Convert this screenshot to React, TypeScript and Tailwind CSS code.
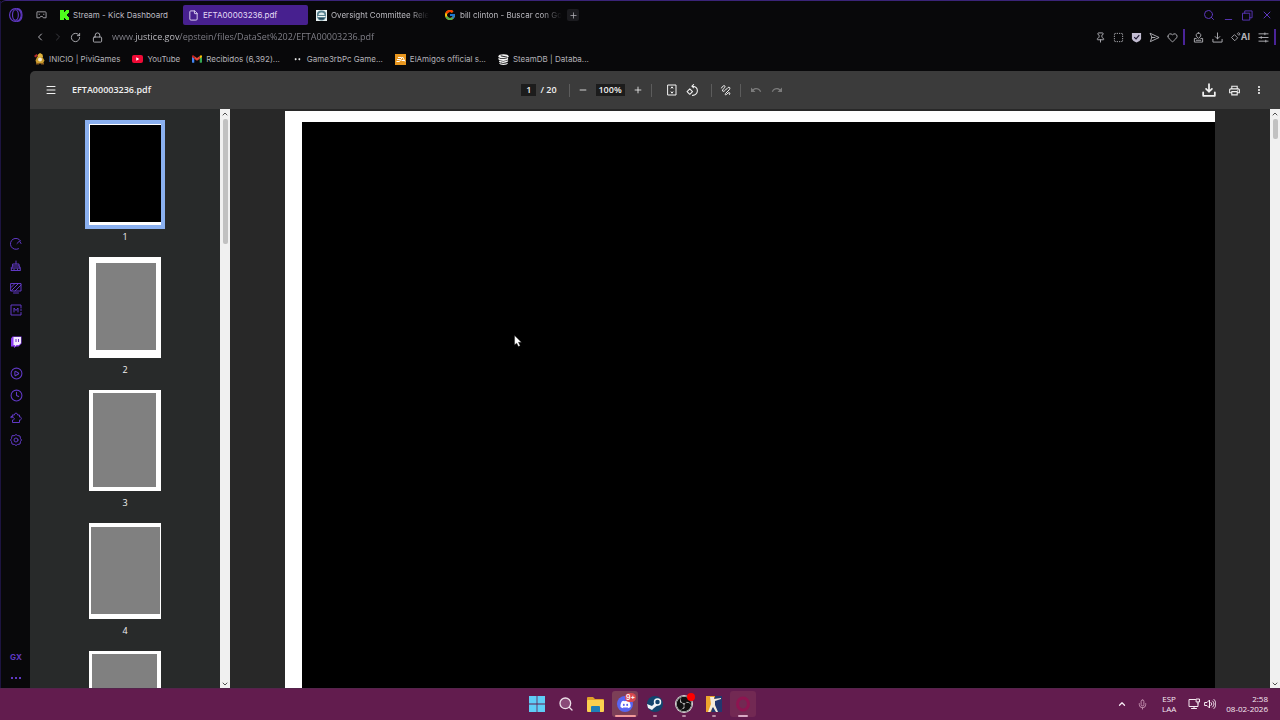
import { useState, type ReactNode } from 'react';
import {
	ChevronLeft,
	ChevronRight,
	ChevronUp,
	ChevronDown,
	CirclePlay,
	Clock,
	File,
	Heart,
	Lock,
	Menu,
	Mic,
	Minus,
	Pin,
	Plus,
	RotateCw,
	Search,
	SquareDashed,
	X,
} from 'lucide-react';
import { FaDiscord } from 'react-icons/fa';
import { FcGoogle } from 'react-icons/fc';
import { MdOutlinePrint, MdMoreVert, MdUndo, MdRedo } from 'react-icons/md';
import { SiObsstudio } from 'react-icons/si';

const URL_TEXT =
	'www.justice.gov/epstein/files/DataSet%202/EFTA00003236.pdf';

type IconProps = { size?: number; children?: ReactNode };

function Stroke({ size = 12, children }: IconProps) {
	return (
		<svg
			width={size}
			height={size}
			viewBox="0 0 24 24"
			fill="none"
			stroke="currentColor"
			strokeWidth="2"
			strokeLinecap="round"
			strokeLinejoin="round"
		>
			{children}
		</svg>
	);
}

function OperaLogo({ size = 14 }: IconProps) {
	return (
		<Stroke size={size}>
			<ellipse cx="11" cy="12" rx="10" ry="11" />
			<ellipse cx="11" cy="12" rx="5" ry="9" />
			<path d="M14 1c11 1 11 21 0 22" />
		</Stroke>
	);
}

function KickLogo() {
	return (
		<svg width="9" height="10" viewBox="0 0 9 10" fill="#4dfb1c">
			<path d="M0 0h4v2h1V1h1V0h3v3H8v1H7v2h1v1h1v3H6V9H5V8H4v2H0z" />
		</svg>
	);
}

function CommitteeLogo() {
	return (
		<svg width="11" height="11" viewBox="0 0 22 22">
			<rect width="22" height="22" fill="#e9f1f3" />
			<path d="M2 8a9 7 0 0 1 18 0v5a9 8 0 0 1-18 0z" fill="#55808e" />
			<path d="M5 10a6 5 0 0 1 12 0z" fill="#dbe8ea" />
			<path d="M3 12h16v2H3z" fill="#f2f6f6" />
			<path d="M5 16h12l-3 3H8z" fill="#23455a" />
		</svg>
	);
}

function PiviLogo() {
	return (
		<svg width="11" height="12" viewBox="0 0 22 24">
			<path d="M0 6l5-4 3 3-5 4z" fill="#b3282d" />
			<path d="M8 3l4-3 5 3 1 5H7z" fill="#e0b23a" />
			<path d="M6 8h11l4 7-3 6H5l-2-6z" fill="#c99a2c" />
			<circle cx="12" cy="13" r="4" fill="#f4ecd0" />
			<path d="M4 20h6v3H4zM14 20h6v3h-6z" fill="#8a5a1e" />
		</svg>
	);
}

function YouTubeLogo() {
	return (
		<svg width="11" height="8" viewBox="0 0 22 16">
			<rect width="22" height="16" rx="4" fill="#f00a36" />
			<path d="M8.500 4.500l6 3.500-6 3.500z" fill="#fff" />
		</svg>
	);
}

function GmailLogo() {
	return (
		<svg width="10" height="8" viewBox="0 0 22 17">
			<path d="M0 3v12a2 2 0 0 0 2 2h3V7z" fill="#4285f4" />
			<path d="M22 3v12a2 2 0 0 1-2 2h-3V7z" fill="#34a853" />
			<path d="M17 2v6l5-4V3c0-3-3-4-5-1z" fill="#fbbc04" />
			<path d="M5 2v6l6 4.500L17 8V2l-6 4.500z" fill="#ea4335" />
			<path d="M0 3v1l5 4V2C3-1 0 0 0 3z" fill="#c5221f" />
		</svg>
	);
}

function GameLogo() {
	return (
		<svg width="11" height="10" viewBox="0 0 11 10">
			<path d="M3.500 4l1.500 1-1.500 1.500-1-1.500zM7.500 4l1 1-1 1.500L6 5z" fill="#e8e8e8" />
		</svg>
	);
}

function EaLogo() {
	return (
		<svg width="11" height="11" viewBox="0 0 22 22">
			<rect width="22" height="22" fill="#e8961e" />
			<path
				d="M6 7h7M4 11h7M3 15h6l6-9 5 9M13 13h5"
				stroke="#fff"
				strokeWidth="2"
				fill="none"
			/>
		</svg>
	);
}

function SteamDbLogo() {
	return (
		<svg width="11" height="11" viewBox="0 0 24 24">
			<ellipse cx="12" cy="5" rx="11" ry="4.500" fill="#f4f4f4" />
			<path
				d="M1 8c4 4 15 4 21 0v4c-5 4-16 4-21 0zM3 14c6 3 13 3 19-1v3c-4 4-15 5-20 1zM2 19c6 3 14 3 20 0-1 6-18 7-20 0z"
				fill="#f4f4f4"
			/>
			<path d="M6 4c4 2 10 1 14 3" stroke="#0a0a0c" strokeWidth="2" fill="none" />
		</svg>
	);
}

function TwitchLogo() {
	return (
		<svg width="12" height="12" viewBox="0 0 24 24">
			<path d="M5 1h18v14l-6 6h-5l-4 3v-3H2V5z" fill="#8a3ff0" />
			<path d="M7 2h15v12l-4 4h-5l-3 3v-3H7z" fill="#f3e9ff" />
			<path d="M11 6h2v6h-2zM16 6h2v6h-2z" fill="#6b2fc4" />
		</svg>
	);
}

const sideIcons = [
	{
		name: 'GX Control',
		icon: (
			<Stroke>
				<path d="M17 21.500A11 11 0 1 1 21 5.500M14 11l5-5 3 5" />
			</Stroke>
		),
	},
	{
		name: 'GX Cleaner',
		icon: (
			<Stroke>
				<path d="M12 2v6M6 8h12v4H6zM5 12l-3 9h19l-2-9M2 16h19M8 21v-3M15 21v-3" />
			</Stroke>
		),
	},
	{
		name: 'Wallpapers',
		icon: (
			<Stroke>
				<path d="M2 3h20v15H2zM2 11l8-8M3 17L17 3M10 18L22 6M7 22h10" />
			</Stroke>
		),
	},
	{
		name: 'Mods',
		icon: (
			<Stroke>
				<path d="M22 8V2H2v20h20v-5M22 11v2M8 16V8l4 5 4-5v8" />
			</Stroke>
		),
	},
	{ name: 'Twitch', className: 'my-[10px]', icon: <TwitchLogo /> },
	{ name: 'Player', icon: <CirclePlay size={13} /> },
	{ name: 'History', icon: <Clock size={13} /> },
	{
		name: 'Extensions',
		icon: (
			<Stroke>
				<path d="M5 6h4c-1-5 7-5 6 0h4v4c5-1 5 7 0 6v5H5v-5c5 0 5-5 0-5-2 0-3 1-3 1V9h3z" />
			</Stroke>
		),
	},
	{
		name: 'Settings',
		icon: (
			<Stroke>
				<path d="M9 3l3-2 3 2 5 1 1 5 2 3-2 3-1 5-5 1-3 2-3-2-5-1-1-5-2-3 2-3 1-5z" />
				<circle cx="12" cy="12" r="4" />
			</Stroke>
		),
	},
];

function Sidebar() {
	return (
		<aside className="flex w-[30px] shrink-0 flex-col items-center border-l border-[#1d1440] pl-px text-[#6039c4]">
			<button aria-label="Menu" className="flex h-[28px] items-center">
				<OperaLogo />
			</button>
			<nav className="my-auto flex flex-col pt-2">
				{sideIcons.map((s) => (
					<button
						key={s.name}
						aria-label={s.name}
						className={`flex h-[22px] w-[22px] items-center justify-center ${s.className ?? ''}`}
					>
						{s.icon}
					</button>
				))}
			</nav>
			<button className="h-[22px] text-[8px] font-bold">GX</button>
			<button aria-label="More" className="flex h-5 items-center gap-[2px]">
				<i className="h-[2px] w-[2px] bg-[#6039c4]" />
				<i className="h-[2px] w-[2px] bg-[#6039c4]" />
				<i className="h-[2px] w-[2px] bg-[#6039c4]" />
			</button>
		</aside>
	);
}

const tabs = [
	{ title: 'Stream - Kick Dashboard', icon: <KickLogo /> },
	{ title: 'EFTA00003236.pdf', icon: <File size={11} strokeWidth={2} />, active: true },
	{ title: 'Oversight Committee Rele', icon: <CommitteeLogo />, faded: true },
	{ title: 'bill clinton - Buscar con Go', icon: <FcGoogle size={12} />, faded: true },
];

function TabBar() {
	return (
		<div className="flex h-[26px] items-center pt-[2px]">
			<button aria-label="Tab islands" className="ml-1 flex w-[14px] justify-center text-[#a5a4ab]">
				<Stroke size={11}>
					<path d="M3 4h18l1 2v11h-6l-2-3h-4l-2 3H2V6zM7 9v1M17 9v1" />
				</Stroke>
			</button>
			<div role="tablist" className="ml-[7px] flex gap-[3px]">
				{tabs.map((t) => (
					<button
						key={t.title}
						role="tab"
						aria-selected={!!t.active}
						className={`flex h-5 w-[125px] items-center gap-1 rounded-[2px] pl-[5px] text-[8px] whitespace-nowrap ${
							t.active ? 'bg-[#47208f] text-[#e4dcf6]' : 'text-[#bcbbc1]'
						}`}
					>
						<span className="shrink-0">{t.icon}</span>
						<span className={t.faded ? 'mask-r-from-80% mask-r-to-100%' : ''}>
							{t.title}
						</span>
					</button>
				))}
			</div>
			<button
				aria-label="New tab"
				className="ml-[3px] flex h-3 w-3 items-center justify-center rounded-[2px] bg-[#1b1b1f] text-[#b4b3b9]"
			>
				<Plus size={9} />
			</button>
			<div className="ml-auto flex items-center gap-2 pr-[7px] text-[#5c37bd]">
				<button aria-label="Search tabs">
					<Search size={12} />
				</button>
				<button aria-label="Minimize" className="pt-2">
					<Minus size={11} />
				</button>
				<button aria-label="Restore">
					<Stroke size={11}>
						<path d="M2 7h15v15H2zM6 7V2h16v15h-5" />
					</Stroke>
				</button>
				<button aria-label="Close">
					<X size={12} />
				</button>
			</div>
		</div>
	);
}

function AddressBar() {
	const [url, setUrl] = useState(URL_TEXT);
	return (
		<div className="flex h-5 items-center text-[#b4b3b9]">
			<div className="ml-1 flex items-center gap-[6px]">
				<button aria-label="Back">
					<ChevronLeft size={12} />
				</button>
				<button aria-label="Forward" className="text-[#3a3a40]">
					<ChevronRight size={12} />
				</button>
				<button aria-label="Reload">
					<RotateCw size={11} />
				</button>
			</div>
			<Lock size={11} className="ml-[11px] shrink-0" />
			<input
				aria-label="Address"
				value={url}
				onChange={(e) => setUrl(e.target.value)}
				className="ml-[9px] min-w-0 flex-1 bg-[linear-gradient(to_right,#85848d_23px,#c6c5cb_23px,#c6c5cb_68px,#85848d_68px)] bg-clip-text font-['Open_Sans',sans-serif] text-[9px] text-transparent outline-none"
			/>
			<div className="flex items-center gap-[7px]">
				<button aria-label="Pin">
					<Pin size={11} />
				</button>
				<button aria-label="Snapshot">
					<SquareDashed size={11} />
				</button>
				<button aria-label="Ad blocker">
					<svg width="11" height="11" viewBox="0 0 24 24">
						<path d="M2 2h20v12c0 4-6 7-10 9-4-2-10-5-10-9z" fill="#c3bdd3" />
						<path d="M7 11l4 4 7-8" stroke="#1b1530" strokeWidth="2.500" fill="none" />
					</svg>
				</button>
				<button aria-label="Send">
					<Stroke size={11}>
						<path d="M3 3l19 9-19 9 3-9zM6 12h7" />
					</Stroke>
				</button>
				<button aria-label="Favorite">
					<Heart size={11} />
				</button>
			</div>
			<i className="ml-[5px] h-4 w-[2px] bg-[#4a2499]" />
			<div className="ml-2 flex items-center gap-2">
				<button aria-label="Profile">
					<Stroke size={11}>
						<path d="M12 2a5 5 0 0 1 3 9l-3 3-3-3a5 5 0 0 1 3-9zM7 14H3v8h18v-8h-4M7 18h10" />
					</Stroke>
				</button>
				<button aria-label="Downloads">
					<Stroke size={11}>
						<path d="M12 2v13M7 10l5 5 5-5M2 16v6h20v-6" />
					</Stroke>
				</button>
				<button aria-label="AI assistant" className="flex items-center text-[9px] font-bold">
					<Stroke size={10}>
						<path d="M9 7l7 7-7 7-7-7zM19 2l3 3-3 3-3-3z" />
					</Stroke>
					AI
				</button>
				<button aria-label="Easy setup">
					<Stroke size={11}>
						<path d="M2 4h20M2 12h20M2 20h20M15 2v4M7 10v4M17 18v4" />
					</Stroke>
				</button>
			</div>
			<i className="mr-1 ml-[5px] h-4 w-[2px] bg-[#4a2499]" />
		</div>
	);
}

const bookmarks = [
	{ label: 'INICIO | PiviGames', icon: <PiviLogo /> },
	{ label: 'YouTube', icon: <YouTubeLogo /> },
	{ label: 'Recibidos (6,392)...', icon: <GmailLogo /> },
	{ label: 'Game3rbPc Game...', icon: <GameLogo /> },
	{ label: 'ElAmigos official s...', icon: <EaLogo /> },
	{ label: 'SteamDB | Databa...', icon: <SteamDbLogo /> },
];

function Bookmarks() {
	return (
		<div className="flex h-6 items-center gap-3 pl-1 text-[8px] text-[#b4b3b9]">
			{bookmarks.map((b) => (
				<a key={b.label} href="#" className="flex items-center gap-1 whitespace-nowrap">
					{b.icon}
					{b.label}
				</a>
			))}
		</div>
	);
}

function Divider() {
	return <i className="h-[13px] w-px bg-[#5c5c5c]" />;
}

function PdfToolbar() {
	return (
		<div className="grid h-[38px] grid-cols-[1fr_auto_1fr] items-center rounded-tl-[5px] bg-[#3b3b3b] font-['Open_Sans',sans-serif] text-[9px] font-semibold text-[#f1f1f1]">
			<div className="flex items-center gap-[15px] pl-[15px]">
				<button aria-label="Toggle thumbnails">
					<Menu size={12} />
				</button>
				<span>EFTA00003236.pdf</span>
			</div>
			<div className="flex items-center pr-[6px]">
				<input
					aria-label="Page"
					defaultValue="1"
					className="h-3 w-[15px] bg-[#1c1c1c] text-center outline-none"
				/>
				<span className="mr-3 ml-1">/ 20</span>
				<Divider />
				<button aria-label="Zoom out" className="mx-2">
					<Minus size={10} />
				</button>
				<input
					aria-label="Zoom"
					defaultValue="100%"
					className="h-3 w-[29px] bg-[#1c1c1c] text-center outline-none"
				/>
				<button aria-label="Zoom in" className="mx-2">
					<Plus size={10} />
				</button>
				<Divider />
				<button aria-label="Fit to page" className="mr-2 ml-[14px]">
					<Stroke>
						<path d="M4 2h16v20H4zM12 6v2M12 16v2M10 8l2-2 2 2M10 16l2 2 2-2" />
					</Stroke>
				</button>
				<button aria-label="Rotate" className="mr-3">
					<Stroke size={13}>
						<path d="M7 9l5 5-5 5-5-5zM11 4h2a8 8 0 1 1-1 17M14 1l-3 3 3 3" />
					</Stroke>
				</button>
				<Divider />
				<button aria-label="Draw" className="mx-2">
					<Stroke>
						<path d="M3 8c2-5 7-6 7-3S4 11 5 14c1 2 4 0 6-2l5-5c4-2 5 2 2 5l-6 6c-3 3-1 5 1 3l3-3c3-2 5 0 3 3" />
					</Stroke>
				</button>
				<Divider />
				<button aria-label="Undo" className="mr-[9px] ml-[9px] text-[#7b7b7b]">
					<MdUndo size={12} />
				</button>
				<button aria-label="Redo" className="text-[#7b7b7b]">
					<MdRedo size={12} />
				</button>
			</div>
			<div className="flex items-center justify-end gap-3 pr-[15px]">
				<button aria-label="Download">
					<Stroke size={14}>
						<path strokeWidth="3" d="M12 2v13M7 10l5 5 5-5M2 16v6h20v-6" />
					</Stroke>
				</button>
				<button aria-label="Print">
					<MdOutlinePrint size={13} />
				</button>
				<button aria-label="More actions">
					<MdMoreVert size={12} />
				</button>
			</div>
		</div>
	);
}

const thumbs = [
	{ page: 1, label: '1', size: 'h-[101px] pt-px pb-[3px] pl-px', fill: 'bg-black', active: true },
	{ page: 2, label: '2', size: 'h-[101px] pt-[6px] pr-[5px] pb-2 pl-[7px]', fill: 'bg-[#808080]' },
	{ page: 3, label: '3', size: 'h-[101px] pt-[3px] pr-[5px] pb-1 pl-1', fill: 'bg-[#808080]' },
	{ page: 4, label: '4', size: 'h-[96px] pt-1 pr-px pb-[5px] pl-[2px]', fill: 'bg-[#808080]' },
	{ page: 5, size: 'h-[101px] pt-[3px] pr-1 pb-1 pl-[3px]', fill: 'bg-[#808080]' },
];

function Scrollbar({ thumb }: { thumb: string }) {
	return (
		<div className="flex w-[10px] shrink-0 flex-col items-center bg-[#f0f0f0] text-[#505050]">
			<ChevronUp size={8} className="my-px shrink-0" strokeWidth={3} />
			<i className={`w-[5px] rounded-[2px] bg-[#c1c1c1] ${thumb}`} />
			<ChevronDown size={8} className="mt-auto shrink-0" strokeWidth={3} />
		</div>
	);
}

function Thumbnails() {
	return (
		<div className="flex w-[190px] shrink-0 flex-col items-center overflow-hidden bg-[#282a2a] pt-[15px]">
			{thumbs.map((t) => (
				<button
					key={t.page}
					aria-label={`Page ${t.page}`}
					className="mb-2 flex shrink-0 flex-col items-center"
				>
					<span
						className={`flex w-[72px] bg-white ${t.size} ${
							t.active ? 'ring-4 ring-[#8ab0f0]' : ''
						}`}
					>
						<i className={`flex-1 ${t.fill}`} />
					</span>
					{t.label && (
						<span className="font-['Open_Sans',sans-serif] text-[9px] leading-6 text-[#f1f1f1]">
							{t.label}
						</span>
					)}
				</button>
			))}
		</div>
	);
}

function PdfViewer() {
	return (
		<div className="flex min-h-0 flex-1">
			<Thumbnails />
			<Scrollbar thumb="h-[125px]" />
			<main className="flex min-w-0 flex-1 bg-[#282828] px-[55px] pt-[2px]">
				<div className="flex flex-1 bg-white pt-[11px] pl-[17px]">
					<div className="flex-1 bg-black" />
				</div>
			</main>
			<Scrollbar thumb="h-5" />
		</div>
	);
}

const apps = [
	{
		name: 'Start',
		icon: (
			<svg width="16" height="16" viewBox="0 0 16 16" fill="#5fcdf7">
				<path d="M0 0h7.600v7.600H0zM8.400 0H16v7.600H8.400zM0 8.400h7.600V16H0zM8.400 8.400H16V16H8.400z" />
			</svg>
		),
	},
	{ name: 'Search', icon: <Search size={16} className="text-[#ecdfe8]" fill="#8a4a78" /> },
	{
		name: 'File Explorer',
		icon: (
			<svg width="17" height="15" viewBox="0 0 17 15">
				<path d="M0 1a1 1 0 0 1 1-1h5l2 2h8a1 1 0 0 1 1 1v4H0z" fill="#e0a12a" />
				<rect y="3" width="17" height="12" rx="1" fill="#fbd04f" />
				<path d="M4 10a1 1 0 0 1 1-1h7a1 1 0 0 1 1 1v5H4z" fill="#1f7fb8" />
			</svg>
		),
	},
	{
		name: 'Discord',
		tile: 'bg-[#7c3f57]',
		bar: 'w-[21px] bg-[#f39a9a]',
		badge: '9+',
		icon: (
			<span className="flex h-4 w-4 items-center justify-center rounded-full bg-[#5865f2]">
				<FaDiscord size={11} color="#fff" />
			</span>
		),
	},
	{
		name: 'Steam',
		bar: 'w-1 bg-[#b98aa6]',
		icon: (
			<svg width="16" height="16" viewBox="0 0 16 16">
				<circle cx="8" cy="8" r="8" fill="#12456e" />
				<path d="M0 8l5 2 4-4 2 3-4 3-2 2-4-2z" fill="#f0f5f8" />
				<circle cx="10.500" cy="6" r="3" fill="#12456e" stroke="#f0f5f8" strokeWidth="1.500" />
			</svg>
		),
	},
	{
		name: 'OBS Studio',
		bar: 'w-1 bg-[#b98aa6]',
		rec: true,
		icon: (
			<SiObsstudio
				size={16}
				color="#d8d8d8"
				className="rounded-full bg-[#101010] ring-1 ring-[#d8d8d8]"
			/>
		),
	},
	{
		name: 'Counter-Strike 2',
		bar: 'w-1 bg-[#b98aa6]',
		icon: (
			<svg width="16" height="16" viewBox="0 0 16 16">
				<path d="M0 0h16v16H0z" fill="#22386f" />
				<path d="M0 0h9L5 16H0z" fill="#eda52c" />
				<path d="M4 1h4v2l7-1v1L9 5v4l3 7h-2L7 11l-3 5H2l3-8z" fill="#f4ecdc" />
			</svg>
		),
	},
	{
		name: 'Opera GX',
		tile: 'bg-[#722953]',
		bar: 'w-[10px] bg-[#d9a9c4]',
		icon: (
			<svg width="16" height="16" viewBox="0 0 16 16" fill="none">
				<ellipse cx="8" cy="8" rx="5.500" ry="6" stroke="#8e1450" strokeWidth="3" />
			</svg>
		),
	},
];

function Taskbar() {
	return (
		<footer className="grid h-8 shrink-0 grid-cols-[1fr_auto_1fr] items-center border-t border-[#54244b] bg-[#621c4e] pb-px">
			<div />
			<div className="flex w-[232px] justify-between">
				{apps.map((a) => (
					<button
						key={a.name}
						aria-label={a.name}
						className={`relative flex h-[26px] w-[26px] items-center justify-center rounded-[3px] ${a.tile ?? ''}`}
					>
						{a.icon}
						{a.badge && (
							<span className="absolute top-[2px] right-[2px] rounded-full bg-[#d8474f] px-px text-[7px] leading-[9px] font-semibold text-white">
								{a.badge}
							</span>
						)}
						{a.rec && (
							<i className="absolute top-[2px] right-[2px] h-2 w-2 rounded-full bg-[#f00]" />
						)}
						{a.bar && (
							<i className={`absolute bottom-0 h-[2px] rounded-full ${a.bar}`} />
						)}
					</button>
				))}
			</div>
			<div className="flex items-center justify-end pr-3 font-['Open_Sans',sans-serif] text-[8px] leading-[10px] font-medium text-[#f6eaf2]">
				<button aria-label="Hidden icons">
					<ChevronUp size={10} strokeWidth={3} />
				</button>
				<button aria-label="Microphone" className="ml-[10px] text-[#c896b4]">
					<Mic size={11} />
				</button>
				<button className="mr-3 ml-[14px] text-center">
					ESP
					<br />
					LAA
				</button>
				<button aria-label="Network">
					<Stroke size={12}>
						<path d="M15 3H2v14h18v-6M17 2h6v6h-6zM20 8v4M7 21h10M12 17v4" />
					</Stroke>
				</button>
				<button aria-label="Volume" className="ml-1">
					<Stroke>
						<path d="M2 9h4l5-5v16l-5-5H2zM14 9c2 2 2 4 0 6M17 6c4 4 4 8 0 12M20 3c5 5 5 13 0 18" />
					</Stroke>
				</button>
				<button className="ml-[10px] text-right">
					2:58
					<br />
					08-02-2026
				</button>
			</div>
		</footer>
	);
}

export default function App() {
	return (
		<div className="relative flex h-screen flex-col overflow-hidden bg-[#08080a] font-[Inter,sans-serif]">
			<div className="flex min-h-0 flex-1 rounded-tl-[6px] border-t border-[#3a2478]">
				<Sidebar />
				<div className="flex min-w-0 flex-1 flex-col">
					<TabBar />
					<AddressBar />
					<Bookmarks />
					<PdfToolbar />
					<PdfViewer />
				</div>
			</div>
			<Taskbar />
			<svg className="absolute top-[335px] left-[514px]" width="8" height="12" viewBox="0 0 9 14">
				<path d="M.500.500v11l2.500-2 2 4 2-1-2-4h3.500z" fill="#fff" stroke="#222" strokeWidth=".5" />
			</svg>
		</div>
	);
}
